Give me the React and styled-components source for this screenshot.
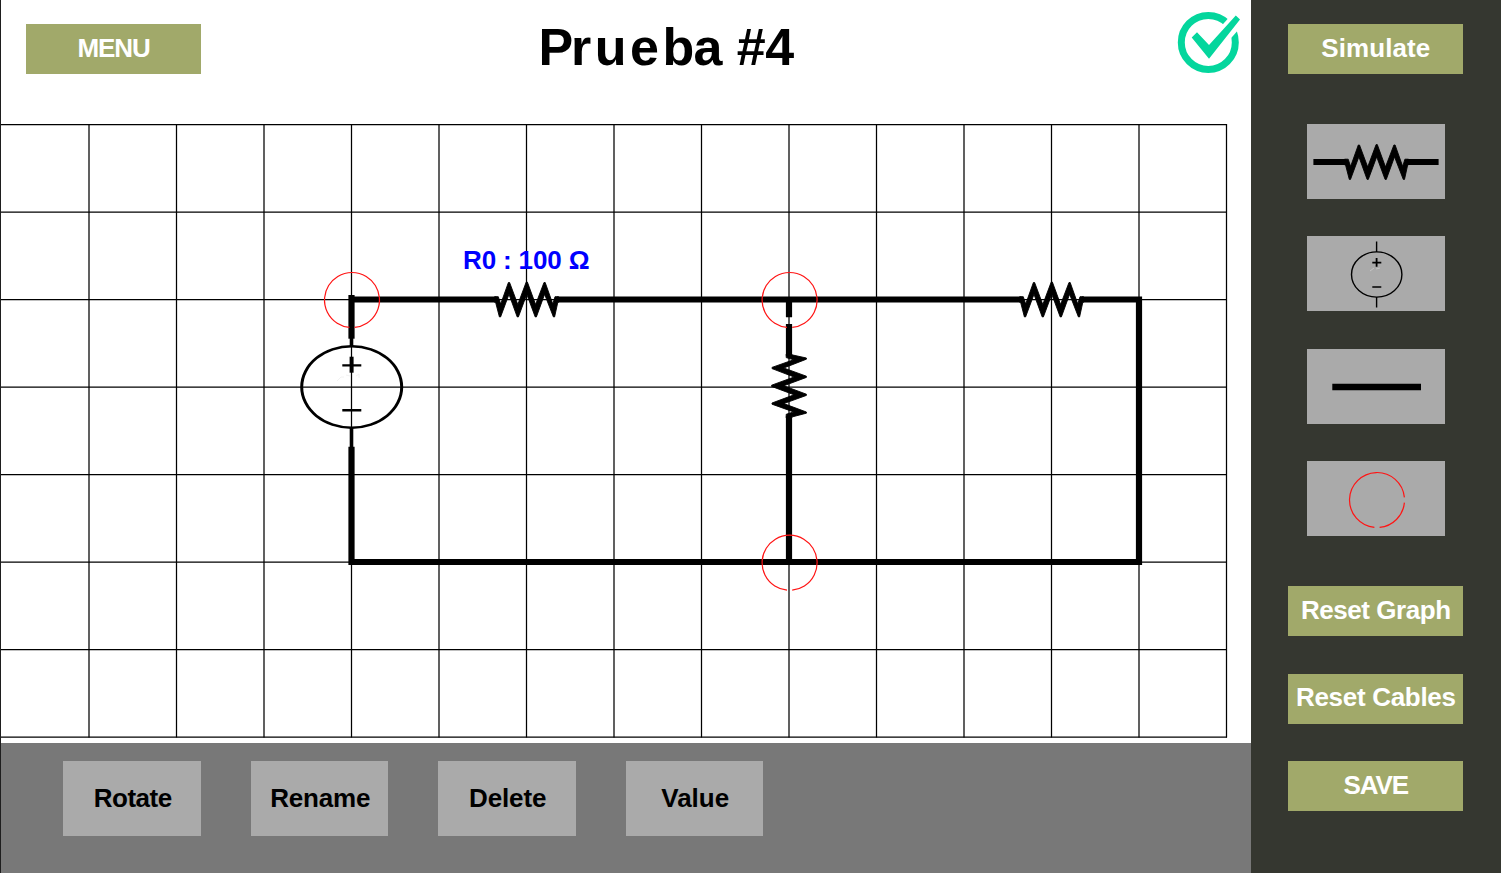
import React from "react";
import styled, { createGlobalStyle } from "styled-components";

const GlobalStyle = createGlobalStyle`
  * { box-sizing: border-box; }
  body { margin: 0; background: #fff; font-family: "Liberation Sans", Arial, sans-serif; }
  button { font-family: inherit; border: 0; border-radius: 0; margin: 0; }
`;

const Page = styled.div`
  display: flex;
  width: 1501px;
  height: 873px;
  overflow: hidden;
  border-left: 1px solid #1e1e1e;
`;

const Main = styled.main`
  display: flex;
  flex-direction: column;
  width: 1250px;
  height: 873px;
  background: #fff;
`;

const Header = styled.header`
  display: flex;
  align-items: flex-start;
  height: 112px;
  padding-left: 25px;
`;

const Title = styled.h1`
  margin: 0 0 0 337.5px;
  font-size: 52px;
  line-height: 94px;
  font-weight: 700;
  color: #000;
  white-space: nowrap;
`;

const Kern = styled.span`
  letter-spacing: ${(p) => p.$by}px;
`;

const StatusIcon = styled.svg`
  display: block;
  width: 64px;
  height: 64px;
  margin: 10px 11px 0 auto;
`;

const Button = styled.button`
  display: flex;
  align-items: center;
  justify-content: center;
  flex: none;
  padding: 0 0 2px;
  font-size: 26px;
  font-weight: 700;
  white-space: nowrap;
  letter-spacing: ${(p) => p.$spacing || 0}px;
`;

const ActionButton = styled(Button)`
  width: 175px;
  height: 50px;
  background: #a1a96a;
  color: #fff;
`;

const MenuButton = styled(ActionButton)`
  margin-top: 24px;
`;

const ToolButton = styled(Button)`
  width: 137.5px;
  height: 75px;
  padding: 0 0 0.5px 1.5px;
  background: #aaa;
  color: #000;
`;

const Board = styled.svg`
  display: block;
  flex: none;
  width: 1250px;
  height: 630.5px;
`;

const ValueLabel = styled.text`
  font-family: "Liberation Sans", Arial, sans-serif;
  font-size: 26px;
  font-weight: 700;
  fill: #00f;
`;

const Toolbar = styled.footer`
  display: flex;
  flex: 1;
  gap: 50px;
  padding: 18.8px 0 0 62.2px;
  background: #787878;
`;

const Sidebar = styled.aside`
  display: flex;
  flex-direction: column;
  align-items: center;
  width: 250px;
  height: 873px;
  padding: 24px 0.4px 0 0;
  background: #353730;
`;

const Parts = styled.div`
  display: flex;
  flex-direction: column;
  gap: 37.5px;
  margin: 49.8px 0 50px;
`;

const PartButton = styled.button`
  display: block;
  width: 137.5px;
  height: 75px;
  padding: 0;
  background: #aaa;
`;

const PartDrawing = styled.svg`
  display: block;
  width: 137.5px;
  height: 75px;
`;

const Actions = styled.div`
  display: flex;
  flex-direction: column;
  gap: 37.5px;
`;

const CELL = 87.5;
const COLUMNS = Array.from({ length: 14 }, (_, i) => 1.5 + (i + 1) * CELL);
const ROWS = Array.from({ length: 8 }, (_, i) => 124.5 + i * CELL);

const Zigzag = ({ x, y, turn = 0 }) => (
  <path
    transform={`translate(${x} ${y}) rotate(${turn})`}
    d="M-32 -2.8H-28.3L-25.9 4.5L-18.2 -17H-17L-8.8 5L-0.4 -17.4H0.8L9 5L17.4 -17H18.6L26.2 4.5L28.4 -2.8H32V2.8H31.2L28 17.4H26.8L18 -5.2L9.8 17.4H8.6L0.2 -5.2L-8.2 17.4H-9.4L-17.6 -5.2L-26 17.4H-27.2L-31 2.8H-32Z"
    fill="#000"
    stroke="#000"
    strokeWidth="0.9"
  />
);

const Node = ({ x, y, openRight }) => (
  <path
    d={
      openRight
        ? `M${x + 27.4} ${y + 2.6}A27.5 27.5 0 0 1 ${x + 2.6} ${y + 27.4}M${x - 2.6} ${y + 27.4}A27.5 27.5 0 1 1 ${x + 27.4} ${y - 2.6}`
        : `M${x - 2.6} ${y + 27.4}A27.5 27.5 0 1 1 ${x + 2.6} ${y + 27.4}`
    }
    fill="none"
    stroke="#ff1414"
    strokeWidth="1.2"
  />
);

const CircuitBoard = () => (
  <Board viewBox="1 112 1250 630.5">
    <g stroke="#000" strokeWidth="1.25">
      {COLUMNS.map((x) => (
        <line key={x} x1={x} x2={x} y1="124" y2="737.5" />
      ))}
      {ROWS.map((y) => (
        <line key={y} x1="1" x2="1227" y1={y} y2={y} />
      ))}
    </g>
    <g fill="none" stroke="#000" strokeWidth="6.2">
      <path d="M349 299.5H496.5M557 299.5H1021.5M1082 299.5H1139V562H351.5V446.7" />
      <path d="M351.5 295V338.7" />
      <path d="M789 299.5V317.3M789 324V356M789 416V562" />
    </g>
    <Zigzag x={526.6} y={299.5} />
    <Zigzag x={1051.6} y={299.5} />
    <Zigzag x={789} y={386} turn={-90} />
    <g fill="none" stroke="#000">
      <path d="M351.5 338V346M351.5 428V447" strokeWidth="3.6" />
      <path d="M342.3 365.4H361.3M342.3 410.3H361.3" strokeWidth="2.4" />
      <path d="M351.6 356.7V372.7" strokeWidth="4" />
    </g>
    <path
      fillRule="evenodd"
      d="M300.2 387a51.5 41.9 0 1 0 103 0a51.5 41.9 0 1 0 -103 0ZM303.2 387a48.5 39.5 0 1 1 97 0a48.5 39.5 0 1 1 -97 0Z"
    />
    <path d="M337 381l4-4h3M346 375l4 1M356 376l3-2v4" fill="none" stroke="#f2f2f2" />
    <Node x={352} y={300} />
    <Node x={789.6} y={300} />
    <Node x={789.6} y={562.7} />
    <ValueLabel x="463" y="269" textLength="126.5">R0 : 100 Ω</ValueLabel>
  </Board>
);

export default function App() {
  return (
    <>
      <GlobalStyle />
      <Page>
        <Main>
          <Header>
            <MenuButton $spacing={-1.1}>MENU</MenuButton>
            <Title>
              <Kern $by={-2.2}>P</Kern>
              <Kern $by={3.5}>rue</Kern>
              <Kern $by={-0.8}>b</Kern>
              <Kern $by={0}>a </Kern>
              <Kern $by={-0.4}>#4</Kern>
            </Title>
            <StatusIcon viewBox="1176 10 64 64">
              <circle cx="1208.3" cy="42.4" r="27" fill="none" stroke="#04d69d" strokeWidth="7" />
              <path d="M1224.5 34L1244 12" stroke="#fff" strokeWidth="15.4" />
              <path
                d="M1191.7 37.5L1197 32.2L1209 44.9L1235.8 15.4L1240 19.6L1209 58.7Z"
                fill="#04d69d"
              />
            </StatusIcon>
          </Header>
          <CircuitBoard />
          <Toolbar>
            <ToolButton $spacing={-0.5}>Rotate</ToolButton>
            <ToolButton $spacing={-0.2}>Rename</ToolButton>
            <ToolButton $spacing={-0.1}>Delete</ToolButton>
            <ToolButton>Value</ToolButton>
          </Toolbar>
        </Main>
        <Sidebar>
          <ActionButton $spacing={0.1}>Simulate</ActionButton>
          <Parts>
            <PartButton aria-label="Resistor">
              <PartDrawing viewBox="1307 124 137.5 75">
                <path d="M1313.4 162H1346.5M1406.5 162H1438.6" stroke="#000" strokeWidth="6.2" />
                <Zigzag x={1376.5} y={162} />
              </PartDrawing>
            </PartButton>
            <PartButton aria-label="Voltage source">
              <PartDrawing viewBox="1307 236 137.5 75">
                <path d="M1370 271l4-3M1376 269l4-1" fill="none" stroke="#c6c6c6" />
                <g fill="none" stroke="#000" strokeWidth="1.4">
                  <ellipse cx="1376.7" cy="274.5" rx="25.2" ry="22.6" />
                  <path d="M1376.6 241.5V252M1376.6 297V307.5M1372.3 287H1381.3" />
                  <path d="M1372.3 262.7H1381.3M1376.6 258V266.7" strokeWidth="1.8" />
                </g>
              </PartDrawing>
            </PartButton>
            <PartButton aria-label="Wire">
              <PartDrawing viewBox="1307 349 137.5 75">
                <path d="M1332.3 387H1421" stroke="#000" strokeWidth="6.4" />
              </PartDrawing>
            </PartButton>
            <PartButton aria-label="Node">
              <PartDrawing viewBox="1307 461 137.5 75">
                <Node x={1377} y={500} openRight />
              </PartDrawing>
            </PartButton>
          </Parts>
          <Actions>
            <ActionButton $spacing={-0.45}>Reset Graph</ActionButton>
            <ActionButton $spacing={-0.3}>Reset Cables</ActionButton>
            <ActionButton $spacing={-1.1}>SAVE</ActionButton>
          </Actions>
        </Sidebar>
      </Page>
    </>
  );
}
